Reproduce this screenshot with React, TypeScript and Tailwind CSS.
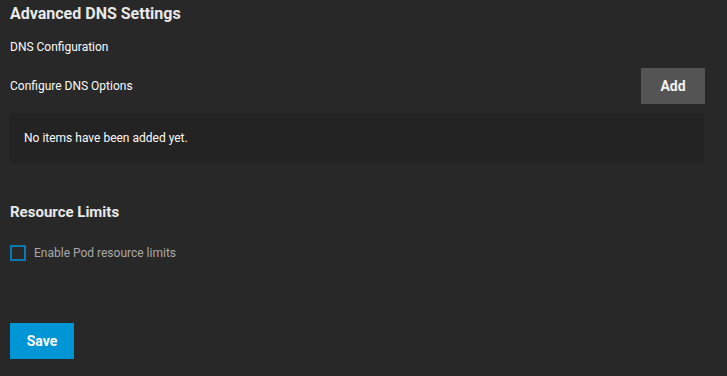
export default function App() {
  return (
    <div className="min-h-[376px] w-full bg-[#282828] text-[#fafafa] font-['Roboto',sans-serif]">
      <div className="pl-[10px] pr-[22px] pt-[5px]">
        <h2 className="h-[18px] text-[16px] font-bold leading-[18px] text-[#e8e8e8]">Advanced DNS Settings</h2>

        <div className="mt-[17px] text-[12px] leading-[14px]">DNS Configuration</div>

        <div className="mt-[14px] flex items-center justify-between">
          <span className="text-[12px] leading-[14px]">Configure DNS Options</span>
          <button className="h-[36px] w-[64px] bg-[#545454] text-[14px] font-bold text-[#f2f2f2]">Add</button>
        </div>

        <div className="mt-[9px] mr-[1px] -ml-[1px] flex h-[50px] items-center bg-[#232323] px-[15px] text-[12px]">
          No items have been added yet.
        </div>

        <h2 className="mt-[40px] text-[15px] font-bold leading-[18px] text-[#e8e8e8]">Resource Limits</h2>

        <label className="mt-[23px] flex items-center gap-[8px]">
          <span className="h-[16px] w-[16px] border-2 border-[#0a79b0]" />
          <span className="text-[12px] text-[#a8a8a8]">Enable Pod resource limits</span>
        </label>

        <button className="mt-[61px] h-[36px] w-[64px] bg-[#0095d5] text-[14px] font-bold text-white">Save</button>
      </div>
    </div>
  );
}
